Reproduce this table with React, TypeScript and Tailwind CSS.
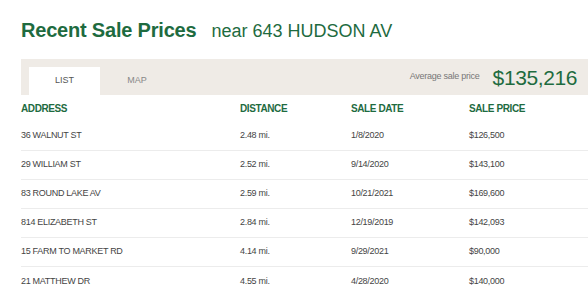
const rows = [
  { address: "36 WALNUT ST", distance: "2.48 mi.", date: "1/8/2020", price: "$126,500" },
  { address: "29 WILLIAM ST", distance: "2.52 mi.", date: "9/14/2020", price: "$143,100" },
  { address: "83 ROUND LAKE AV", distance: "2.59 mi.", date: "10/21/2021", price: "$169,600" },
  { address: "814 ELIZABETH ST", distance: "2.84 mi.", date: "12/19/2019", price: "$142,093" },
  { address: "15 FARM TO MARKET RD", distance: "4.14 mi.", date: "9/29/2021", price: "$90,000" },
  { address: "21 MATTHEW DR", distance: "4.55 mi.", date: "4/28/2020", price: "$140,000" },
];

export default function App() {
  return (
    <div className="w-[588px] h-[300px] overflow-hidden bg-white pl-[21px] font-['Liberation_Sans',Arial,sans-serif]">
      <div className="flex items-baseline pt-[15px] h-[59px]">
        <h1 className="text-[20px] font-bold text-[#1e6b3f] tracking-[-0.2px]">Recent Sale Prices</h1>
        <span className="ml-[15px] text-[18px] text-[#1e6b3f]">near 643 HUDSON AV</span>
      </div>

      <div className="flex items-end h-[36px] bg-[#efebe6] pl-[8px]">
        <div className="w-[71px] h-[28px] bg-white flex items-center justify-center text-[9px] text-[#555]">
          LIST
        </div>
        <div className="w-[74px] h-[28px] flex items-center justify-center text-[9px] text-[#888]">MAP</div>
        <div className="ml-auto flex items-center self-center pr-[11px]">
          <span className="text-[9px] text-[#777] mr-[13px] tracking-[-0.25px]">Average sale price</span>
          <span className="text-[21px] text-[#1e6b3f] leading-none tracking-[-0.4px]">$135,216</span>
        </div>
      </div>

      <div className="grid grid-cols-[219px_111px_118px_1fr] h-[27px] items-center text-[10px] font-bold text-[#1e6b3f] tracking-[-0.4px]">
        <div>ADDRESS</div>
        <div>DISTANCE</div>
        <div>SALE DATE</div>
        <div>SALE PRICE</div>
      </div>

      {rows.map((r, i) => (
        <div
          key={r.address}
          className={`grid grid-cols-[219px_111px_118px_1fr] h-[29px] items-center text-[9px] text-[#444] tracking-[-0.3px] ${
            i < rows.length - 1 ? "border-b border-[#ececec]" : ""
          }`}
        >
          <div>{r.address}</div>
          <div>{r.distance}</div>
          <div>{r.date}</div>
          <div>{r.price}</div>
        </div>
      ))}
    </div>
  );
}
